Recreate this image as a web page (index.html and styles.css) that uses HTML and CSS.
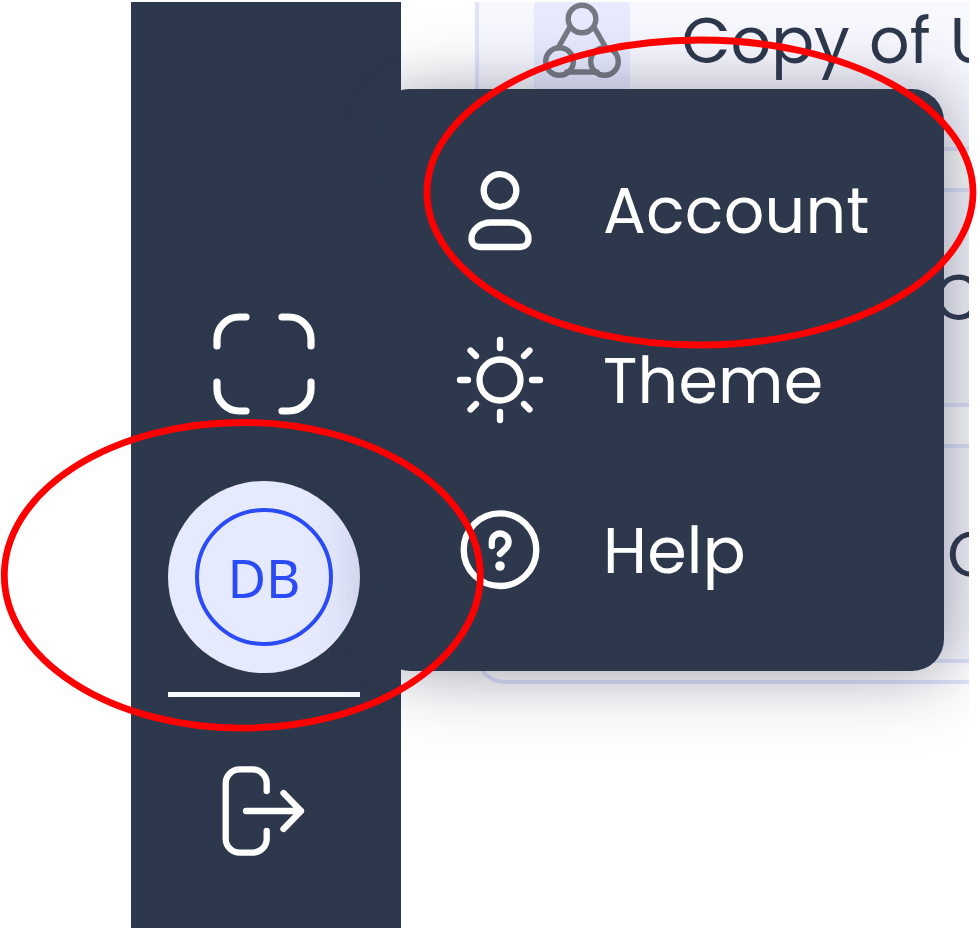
FILE: index.html
```html
<!DOCTYPE html>
<html lang="en">
<head>
<meta charset="utf-8">
<title>Account menu</title>
<link rel="stylesheet" href="styles.css">
</head>
<body>
<div class="stage">
  <div class="frame">
    <nav class="sidebar">
      <svg class="icon expand" viewBox="0 0 108 108"><path d="M7 36V29A22 22 0 0 1 29 7H36M72 7H79A22 22 0 0 1 101 29V36M101 72V79A22 22 0 0 1 79 101H72M36 101H29A22 22 0 0 1 7 79V72"/></svg>
      <div class="avatar"><div class="ring"><span>DB</span></div></div>
      <div class="underline"></div>
      <svg class="icon logout" viewBox="0 0 96 96"><path d="M51.700 28V20.300A14 14 0 0 0 37.700 6.300H24.700A14 14 0 0 0 10.700 20.300V75.700A14 14 0 0 0 24.700 89.700H37.700A14 14 0 0 0 51.700 75.700V68"/><path d="M31 48H86M68.500 30L86 48L68.500 66"/></svg>
    </nav>
    <main class="list">
      <div class="card first">
        <div class="tile"><svg viewBox="0 0 96 88"><path d="M36 25L24 46M60 25L72 46M33 70H63"/><circle cx="48" cy="17" r="13.800"/><circle cx="25.500" cy="59.500" r="13.800"/><circle cx="70.500" cy="59.500" r="13.800"/></svg></div>
        <span class="title">Copy of U</span>
      </div>
      <div class="card second"><span class="title">C</span></div>
      <div class="card third"><span class="title">C</span></div>
    </main>
    <div class="menu">
      <div class="item">
        <svg class="icon" viewBox="0 0 90 90"><circle cx="45" cy="25.500" r="16.300"/><path d="M36 57.500H54C65 57.500 73.500 65 73.500 73.500C73.500 79 70 82 65 82H25C20 82 16.500 79 16.500 73.500C16.500 65 25 57.500 36 57.500Z"/></svg>
        <span>Account</span>
      </div>
      <div class="item">
        <svg class="icon" viewBox="0 0 90 90"><circle cx="45" cy="45" r="20.500"/><path d="M45 5V13M45 77V85M5 45H13M77 45H85M15.500 15.500L21 21M69 69L74.500 74.500M15.500 74.500L21 69M69 21L74.500 15.500"/></svg>
        <span>Theme</span>
      </div>
      <div class="item">
        <svg class="icon" viewBox="0 0 90 90"><circle cx="45" cy="44.700" r="36.300"/><path d="M36.800 41V37.500A8.400 8.400 0 1 1 51.500 42.500L45 49"/><circle class="dot" cx="45" cy="61" r="4.800"/></svg>
        <span>Help</span>
      </div>
    </div>
  </div>
  <svg class="marks" viewBox="0 0 980 930"><ellipse cx="700" cy="192.500" rx="273" ry="152.500"/><ellipse cx="242.300" cy="575.300" rx="238" ry="152.800"/></svg>
</div>
</body>
</html>
```

FILE: styles.css
```css
* { box-sizing: border-box; }
body { margin: 0; background: #fff; font-family: Poppins, Inter, "Open Sans", sans-serif; }
.stage { position: relative; width: 980px; height: 930px; overflow: hidden; padding: 2px 11px 0 0; }
.frame { position: relative; display: flex; height: 925.5px; padding-left: 130.5px; overflow: hidden; }
svg { display: block; flex: none; fill: none; stroke-linecap: round; stroke-linejoin: round; }
.icon { width: 90px; height: 90px; stroke: #fff; stroke-width: 6.3; }

.sidebar { display: flex; flex-direction: column; align-items: center; flex: none; width: 270.5px; padding-top: 308px; background: #2e384d; }
.icon.expand { width: 108px; height: 108px; stroke-width: 7.2; margin-right: 4px; }
.avatar { display: flex; align-items: center; justify-content: center; flex: none; width: 192px; height: 192px; margin: 63px 3.5px 0 0; border-radius: 50%; background: #e6eaff; }
.ring { display: flex; align-items: center; justify-content: center; width: 138px; height: 138px; padding-top: 2px; border: 4px solid #2b4bf7; border-radius: 50%; color: #2b4bf7; font: 53px/60px "Noto Sans", sans-serif; }
.underline { flex: none; width: 192px; height: 5px; margin: 18.5px 3.5px 0 0; background: #f8faff; }
.icon.logout { width: 96px; height: 96px; margin: 66.5px 5px 0 0; }

.list { flex: none; width: 520px; height: 682px; margin-left: 74px; border: solid #e0e5fd; border-width: 0 0 4px 4px; border-bottom-left-radius: 30px; }
.card { display: flex; align-items: center; background: #f8f8ff; border-bottom: 4px solid #e0e5fd; overflow: hidden; }
.title { color: #2e384d; font-size: 63.5px; line-height: 76px; white-space: nowrap; word-spacing: 2.2px; }
.first { height: 149px; align-items: flex-start; }
.first .title { margin: 1px 0 0 51.5px; }
.tile { flex: none; width: 96px; height: 100px; margin-left: 55px; border-radius: 4px; background: #e8ebff; }
.tile svg { width: 96px; height: 88px; stroke: #767982; stroke-width: 5.4; }
.second, .third { height: 219px; margin-top: 37px; border-top: 4px solid #e0e5fd; }
.second .title { margin: 1px 0 0 454.5px; }
.third .title { margin: 3px 0 0 468px; }

.menu { position: absolute; left: 378px; top: 87px; width: 566px; height: 582px; padding: 36px 0 36px 76.5px; border-radius: 32px; background: #2e384d; box-shadow: 8px 4px 76px rgba(44, 54, 72, .36), 0 0 44px rgba(60, 48, 96, .12); }
.item { display: flex; align-items: center; gap: 58.5px; height: 170px; color: #fff; font-size: 63.5px; line-height: 76px; letter-spacing: .25px; }
.item span { padding-top: 2px; }
.icon .dot { fill: #fff; stroke: none; }
.marks { position: absolute; left: 0; top: 0; width: 980px; height: 930px; stroke: #f00; stroke-width: 6.8; }
```
